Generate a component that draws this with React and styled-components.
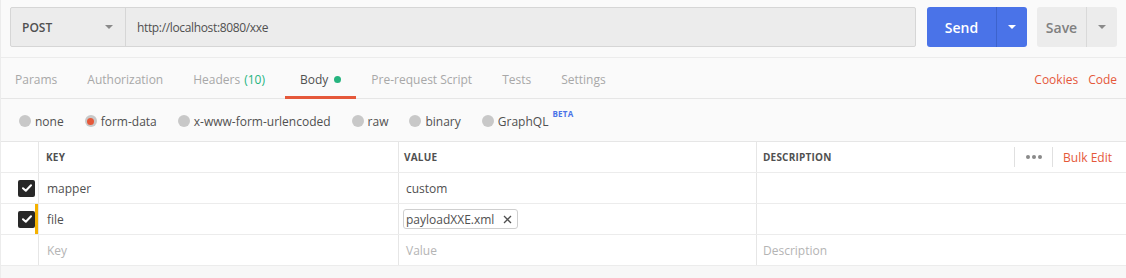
import React from "react";
import styled, { createGlobalStyle } from "styled-components";

const Global = createGlobalStyle`
  html, body { margin: 0; padding: 0; background: #fafafa; }
  body { font-family: "Open Sans", "Noto Sans", sans-serif; color: #505050; }
  * { box-sizing: border-box; }
`;

const Page = styled.div`
  width: 1126px;
  height: 278px;
  background: #fafafa;
  border-left: 1px solid #ececec;
  overflow: hidden;
`;

const TopBar = styled.div`
  display: flex;
  align-items: stretch;
  height: 47px;
  padding: 7px 9px 0 9px;
`;

const UrlGroup = styled.div`
  flex: 1;
  display: flex;
  height: 40px;
  border: 1px solid #d6d6d6;
  border-radius: 2px;
  background: #ececec;
`;

const Method = styled.div`
  width: 115px;
  display: flex;
  align-items: center;
  justify-content: space-between;
  padding: 0 12px 0 11px;
  border-right: 1px solid #d6d6d6;
  font-size: 12px;
  font-weight: 600;
  color: #505050;
`;

const Caret = styled.span`
  width: 0;
  height: 0;
  border-left: 4px solid transparent;
  border-right: 4px solid transparent;
  border-top: 4px solid ${(p) => p.$color || "#8a8a8a"};
`;

const UrlText = styled.div`
  display: flex;
  align-items: center;
  padding-left: 11px;
  font-size: 12px;
  letter-spacing: -0.35px;
  color: #505050;
`;

const SplitButton = styled.div`
  display: flex;
  height: 40px;
  margin-left: ${(p) => p.$ml}px;
  border-radius: 3px;
  background: ${(p) => (p.$primary ? "#4a73e8" : "#ececec")};
  color: ${(p) => (p.$primary ? "#ffffff" : "#808080")};
  overflow: hidden;
`;

const MainPart = styled.div`
  width: ${(p) => p.$w}px;
  display: flex;
  align-items: center;
  justify-content: center;
  font-size: 14px;
  font-weight: 600;
  border-right: 1px solid ${(p) => (p.$primary ? "#3d63cc" : "#d9d9d9")};
`;

const CaretPart = styled.div`
  width: 30px;
  display: flex;
  align-items: center;
  justify-content: center;
`;

const TabsRow = styled.div`
  display: flex;
  align-items: stretch;
  height: 42px;
  margin-top: 10px;
  border-top: 1px solid #ececec;
  border-bottom: 1px solid #e6e6e6;
  padding: 2px 9px 0 14px;
`;

const Tab = styled.div`
  position: relative;
  display: flex;
  align-items: center;
  margin-right: ${(p) => p.$mr}px;
  font-size: 12px;
  color: ${(p) => (p.$active ? "#505050" : "#a8a8a8")};
  ${(p) =>
    p.$active &&
    `&::after { content: ""; position: absolute; left: -15px; right: -15px; bottom: -1px; height: 3px; background: #e5583a; }`}
`;

const Count = styled.span`
  color: #26b47f;
  margin-left: 4px;
`;

const Dot = styled.span`
  width: 7px;
  height: 7px;
  border-radius: 50%;
  background: #26b47f;
  margin-left: 6px;
`;

const Spacer = styled.div`
  flex: 1;
`;

const LinkTab = styled.div`
  display: flex;
  align-items: center;
  font-size: 12px;
  color: #e5583a;
  margin-left: ${(p) => p.$ml || 0}px;
`;

const RadioRow = styled.div`
  display: flex;
  align-items: center;
  height: 42px;
  padding-left: 18px;
  padding-top: 2px;
`;

const RadioItem = styled.div`
  display: flex;
  align-items: center;
  margin-right: ${(p) => p.$mr}px;
  font-size: 12px;
  color: #505050;
`;

const RadioCircle = styled.span`
  width: 12px;
  height: 12px;
  border-radius: 50%;
  background: #c8c8c8;
  margin-right: 4px;
  display: flex;
  align-items: center;
  justify-content: center;
  &::after {
    content: "";
    display: ${(p) => (p.$on ? "block" : "none")};
    width: 7px;
    height: 7px;
    border-radius: 50%;
    background: #e5583a;
  }
`;

const Beta = styled.sup`
  font-size: 8px;
  font-weight: 700;
  color: #4a73e8;
  margin-left: 4px;
  align-self: flex-start;
  margin-top: -5px;
  letter-spacing: 0.3px;
`;

const Table = styled.div`
  border-top: 1px solid #e6e6e6;
  background: #ffffff;
`;

const Row = styled.div`
  display: grid;
  grid-template-columns: 38px 360px 358px 1fr;
  height: 31px;
  border-bottom: 1px solid #ececec;
`;

const CheckCell = styled.div`
  position: relative;
  display: flex;
  align-items: center;
  justify-content: flex-end;
  padding-right: 3px;
  border-right: 1px solid #e6e6e6;
  ${(p) =>
    p.$mark &&
    `&::after { content: ""; position: absolute; right: 0; top: 0; bottom: 0; width: 3px; background: #f5b200; }`}
`;

const CheckBox = styled.span`
  width: 17px;
  height: 17px;
  border-radius: 2px;
  background: #282828;
  display: flex;
  align-items: center;
  justify-content: center;
`;

const Cell = styled.div`
  display: flex;
  align-items: center;
  padding-left: ${(p) => p.$pl || 7}px;
  border-right: ${(p) => (p.$last ? "none" : "1px solid #e6e6e6")};
  font-size: 12px;
  color: ${(p) => (p.$ph ? "#b4b4b4" : "#505050")};
`;

const HeadCell = styled(Cell)`
  font-size: 10px;
  font-weight: 700;
  color: #505050;
  letter-spacing: 0.2px;
`;

const HeadTools = styled.div`
  margin-left: auto;
  display: flex;
  align-items: center;
  height: 100%;
  padding: 5px 0;
`;

const ToolSep = styled.span`
  width: 1px;
  align-self: stretch;
  background: #e0e0e0;
`;

const Dots = styled.span`
  display: flex;
  gap: 2px;
  padding: 0 10px 0 11px;
  & > i {
    width: 4px;
    height: 4px;
    border-radius: 50%;
    background: #8a8a8a;
  }
`;

const BulkEdit = styled.span`
  font-size: 12px;
  font-weight: 400;
  color: #e5583a;
  letter-spacing: 0;
  padding: 0 14px 0 10px;
`;

const Chip = styled.span`
  display: inline-flex;
  align-items: center;
  height: 20px;
  padding: 0 5px 0 2px;
  border: 1px solid #cfcfcf;
  border-radius: 3px;
  font-size: 12px;
  color: #505050;
  margin-left: -3px;
`;

const ChipX = styled.svg`
  margin-left: 9px;
`;

const Footer = styled.div`
  height: 20px;
  background: #f7f7f7;
`;

const Check = () => (
  <CheckBox>
    <svg width="10" height="8" viewBox="0 0 10 8">
      <path d="M1 4.2 L3.8 6.8 L9 1.2" stroke="#fff" strokeWidth="2" fill="none" strokeLinecap="round" strokeLinejoin="round" />
    </svg>
  </CheckBox>
);

export default function App() {
  return (
    <Page>
      <Global />
      <TopBar>
        <UrlGroup>
          <Method>
            POST
            <Caret />
          </Method>
          <UrlText>http://localhost:8080/xxe</UrlText>
        </UrlGroup>
        <SplitButton $primary $ml={11}>
          <MainPart $primary $w={70}>Send</MainPart>
          <CaretPart>
            <Caret $color="#ffffff" />
          </CaretPart>
        </SplitButton>
        <SplitButton $ml={10}>
          <MainPart $w={50}>Save</MainPart>
          <CaretPart>
            <Caret $color="#8a8a8a" />
          </CaretPart>
        </SplitButton>
      </TopBar>

      <TabsRow>
        <Tab $mr={30}>Params</Tab>
        <Tab $mr={30}>Authorization</Tab>
        <Tab $mr={35}>
          Headers<Count>(10)</Count>
        </Tab>
        <Tab $mr={30} $active>
          Body<Dot />
        </Tab>
        <Tab $mr={30}>Pre-request Script</Tab>
        <Tab $mr={30}>Tests</Tab>
        <Tab $mr={0}>Settings</Tab>
        <Spacer />
        <LinkTab>Cookies</LinkTab>
        <LinkTab $ml={10}>Code</LinkTab>
      </TabsRow>

      <RadioRow>
        <RadioItem $mr={21}>
          <RadioCircle />
          none
        </RadioItem>
        <RadioItem $mr={21}>
          <RadioCircle $on />
          form-data
        </RadioItem>
        <RadioItem $mr={21}>
          <RadioCircle />
          x-www-form-urlencoded
        </RadioItem>
        <RadioItem $mr={21}>
          <RadioCircle />
          raw
        </RadioItem>
        <RadioItem $mr={21}>
          <RadioCircle />
          binary
        </RadioItem>
        <RadioItem $mr={0}>
          <RadioCircle />
          GraphQL
          <Beta>BETA</Beta>
        </RadioItem>
      </RadioRow>

      <Table>
        <Row>
          <CheckCell />
          <HeadCell $pl={7}>KEY</HeadCell>
          <HeadCell $pl={5}>VALUE</HeadCell>
          <HeadCell $pl={6} $last>
            DESCRIPTION
            <HeadTools>
              <ToolSep />
              <Dots>
                <i />
                <i />
                <i />
              </Dots>
              <ToolSep />
              <BulkEdit>Bulk Edit</BulkEdit>
            </HeadTools>
          </HeadCell>
        </Row>
        <Row>
          <CheckCell>
            <Check />
          </CheckCell>
          <Cell $pl={8}>mapper</Cell>
          <Cell>custom</Cell>
          <Cell $last />
        </Row>
        <Row>
          <CheckCell $mark>
            <Check />
          </CheckCell>
          <Cell $pl={8}>file</Cell>
          <Cell>
            <Chip>
              payloadXXE.xml
              <ChipX width="9" height="9" viewBox="0 0 9 9">
                <path d="M1 1 L8 8 M8 1 L1 8" stroke="#505050" strokeWidth="1.3" />
              </ChipX>
            </Chip>
          </Cell>
          <Cell $last />
        </Row>
        <Row>
          <CheckCell />
          <Cell $ph $pl={8}>Key</Cell>
          <Cell $ph>Value</Cell>
          <Cell $ph $pl={6} $last>
            Description
          </Cell>
        </Row>
      </Table>
      <Footer />
    </Page>
  );
}
